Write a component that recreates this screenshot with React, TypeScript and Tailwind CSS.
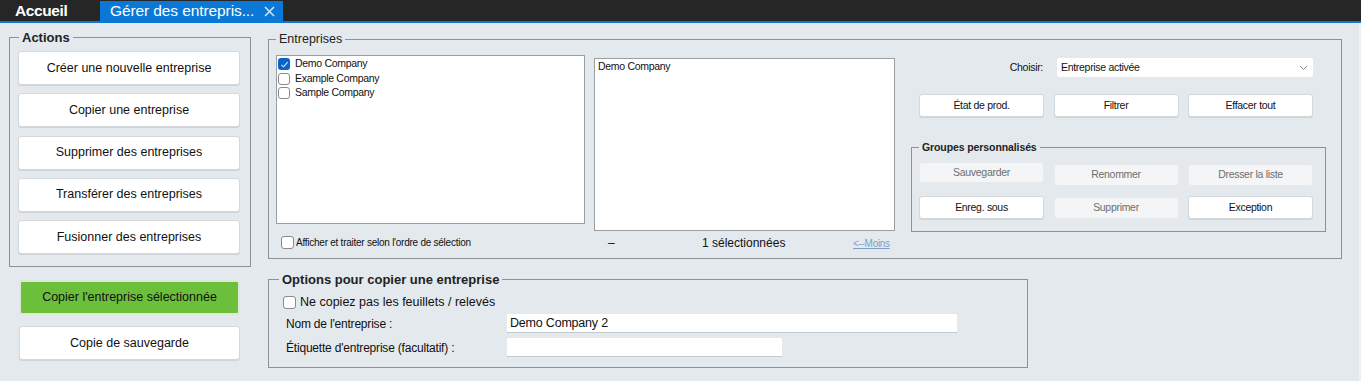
import React from "react";

const Btn = ({
  children,
  className = "",
  disabled = false,
}: {
  children: React.ReactNode;
  className?: string;
  disabled?: boolean;
}) => (
  <div
    className={
      "flex items-center justify-center rounded-[3px] border " +
      (disabled
        ? "border-[#e6eaed] bg-[#f3f5f6] text-[#6e6e6e] "
        : "border-[#d3d8dc] bg-white text-[#111] shadow-[0_1px_0_#cfd4d8] ") +
      className
    }
  >
    {children}
  </div>
);

const Box = ({ checked = false, size = "w-[13px] h-[13px]" }: { checked?: boolean; size?: string }) =>
  checked ? (
    <div className={"flex shrink-0 items-center justify-center rounded-[3px] bg-[#0b63c4] " + size}>
      <svg width="9" height="9" viewBox="0 0 9 9">
        <polyline points="1.5,4.8 3.6,6.8 7.6,2.2" fill="none" stroke="#dfe9f6" strokeWidth="1.1" />
      </svg>
    </div>
  ) : (
    <div className={"shrink-0 rounded-[3px] border border-[#8a8a8a] bg-white " + size} />
  );

export default function App() {
  return (
    <div className="h-[381px] w-[1361px] overflow-hidden bg-[#e3e9ed] font-['Liberation_Sans',Arial,sans-serif] text-[#111]">
      {/* tab bar */}
      <div className="flex h-[23px] border-b-2 border-[#0a78d4] bg-[#262626]">
        <div className="flex w-[100px] items-center pl-[15px] text-[15.5px] font-bold tracking-[-0.4px] text-white">
          Accueil
        </div>
        <div className="mt-[1px] flex w-[183px] items-center bg-[#0a78d4] pl-[10px] text-[15.5px] tracking-[-0.1px] text-white">
          <span>Gérer des entrepris...</span>
          <svg className="ml-[10px]" width="11" height="11" viewBox="0 0 11 11">
            <path d="M1 1 L10 10 M10 1 L1 10" stroke="#cfe3f6" strokeWidth="1.6" />
          </svg>
        </div>
      </div>

      {/* body */}
      <div className="flex h-[358px] border-r-2 border-[#eef2f4] pl-[9px]">
        {/* left column */}
        <div className="flex w-[242px] flex-col">
          <div className="mt-[14px] border border-[#8c9196]">
            <div className="-mt-[8px] ml-[9px] w-fit bg-[#e3e9ed] px-[3px] text-[13px] font-bold leading-[15px] text-[#222]">
              Actions
            </div>
            <div className="mt-[6px] flex flex-col gap-[8.25px] pb-[12px] pl-[8px] pr-[10px] text-[12.5px]">
              <Btn className="h-[34px]">Créer une nouvelle entreprise</Btn>
              <Btn className="h-[34px]">Copier une entreprise</Btn>
              <Btn className="h-[34px]">Supprimer des entreprises</Btn>
              <Btn className="h-[34px]">Transférer des entreprises</Btn>
              <Btn className="h-[34px]">Fusionner des entreprises</Btn>
            </div>
          </div>
          <div className="ml-[10px] mt-[13px] flex h-[35px] w-[221px] items-center justify-center rounded-[3px] border-2 border-[#dfe6da] bg-[#6bbf3a] text-[12.5px] text-[#111]">
            Copier l'entreprise sélectionnée
          </div>
          <Btn className="ml-[10px] mt-[11px] h-[34px] w-[221px] text-[12.5px]">Copie de sauvegarde</Btn>
        </div>

        {/* right column */}
        <div className="ml-[17px] flex flex-col">
          {/* Entreprises */}
          <div className="mt-[16px] h-[220px] w-[1074px] border border-[#8c9196]">
            <div className="-mt-[8px] ml-[7px] w-fit bg-[#e3e9ed] px-[3px] text-[12.5px] leading-[15px] text-[#222]">
              Entreprises
            </div>
            <div className="flex items-start">
              {/* list 1 */}
              <div className="ml-[7px] mt-[8px] flex w-[309px] flex-col">
                <div className="h-[169px] border border-[#9a9fa4] bg-white pl-[1px] pt-[1px] text-[10.5px] tracking-[-0.3px]">
                  {[
                    ["Demo Company", true],
                    ["Example Company", false],
                    ["Sample Company", false],
                  ].map(([n, c]) => (
                    <div key={n as string} className="flex h-[14.5px] items-center gap-[5px]">
                      <Box checked={c as boolean} size="w-[12px] h-[12px]" />
                      <span>{n as string}</span>
                    </div>
                  ))}
                </div>
                <div className="ml-[5px] mt-[11px] flex h-[14px] items-center gap-[2px] text-[10px] tracking-[-0.25px]">
                  <Box />
                  <span>Afficher et traiter selon l'ordre de sélection</span>
                </div>
              </div>

              {/* list 2 */}
              <div className="ml-[9px] mt-[11px] flex w-[301px] flex-col">
                <div className="h-[173px] border border-[#9a9fa4] bg-white pl-[3px] text-[10.5px] tracking-[-0.3px]">
                  Demo Company
                </div>
                <div className="mt-[5px] flex h-[14px] items-center">
                  <span className="ml-[14px] w-[94px] text-[12px]">–</span>
                  <span className="w-[151px] text-[12px]">1 sélectionnées</span>
                  <span className="text-[10px] tracking-[-0.3px] text-[#7f9fc8] underline">&lt;--Moins</span>
                </div>
              </div>

              {/* right controls */}
              <div className="ml-[16px] flex w-[415px] flex-col">
                <div className="mt-[11px] flex h-[19px] items-center justify-end gap-[14px] pr-[13px]">
                  <span className="text-[10.5px] tracking-[-0.3px]">Choisir:</span>
                  <div className="flex h-[19px] w-[256px] items-center justify-between rounded-[2px] bg-white pl-[4px] pr-[5px] text-[10.5px] tracking-[-0.3px]">
                    <span>Entreprise activée</span>
                    <svg width="9" height="6" viewBox="0 0 9 6">
                      <polyline points="1,1 4.5,4.5 8,1" fill="none" stroke="#8a8a8a" strokeWidth="1" />
                    </svg>
                  </div>
                </div>
                <div className="mt-[17px] flex gap-[9.5px] pl-[8px] text-[10.5px] tracking-[-0.3px]">
                  <Btn className="h-[23px] w-[125px]">État de prod.</Btn>
                  <Btn className="h-[23px] w-[125px]">Filtrer</Btn>
                  <Btn className="h-[23px] w-[125px]">Effacer tout</Btn>
                </div>
                <div className="mt-[30px] h-[85px] w-[415px] border border-[#8c9196]">
                  <div className="-mt-[7px] ml-[7px] w-fit bg-[#e3e9ed] px-[3px] text-[10.5px] font-bold leading-[13px] tracking-[-0.1px] text-[#222]">
                    Groupes personnalisés
                  </div>
                  <div className="flex items-start gap-[9.5px] pl-[7px] text-[10.5px] tracking-[-0.3px]">
                    <Btn disabled className="mt-[8px] h-[21px] w-[125px]">Sauvegarder</Btn>
                    <Btn disabled className="mt-[10px] h-[22px] w-[125px]">Renommer</Btn>
                    <Btn disabled className="mt-[10px] h-[22px] w-[125px]">Dresser la liste</Btn>
                  </div>
                  <div className="flex items-start gap-[9.5px] pl-[7px] text-[10.5px] tracking-[-0.3px]">
                    <Btn className="mt-[10px] h-[23px] w-[125px]">Enreg. sous</Btn>
                    <Btn disabled className="mt-[11px] h-[22px] w-[125px]">Supprimer</Btn>
                    <Btn className="mt-[10px] h-[23px] w-[125px]">Exception</Btn>
                  </div>
                </div>
              </div>
            </div>
          </div>

          {/* Options */}
          <div className="mt-[20px] h-[89px] w-[760px] border border-[#8c9196]">
            <div className="-mt-[8px] ml-[10px] w-fit bg-[#e3e9ed] px-[3px] text-[13px] font-bold leading-[15px] text-[#222]">
              Options pour copier une entreprise
            </div>
            <div className="ml-[14px] mt-[8px] flex h-[14px] items-center gap-[4px] text-[12.5px]">
              <Box />
              <span>Ne copiez pas les feuillets / relevés</span>
            </div>
            <div className="ml-[17px] mt-[5px] flex h-[19px] items-center text-[12px] tracking-[-0.2px]">
              <span className="w-[221px]">Nom de l'entreprise :</span>
              <div className="flex h-[19px] w-[450px] items-center border-b border-[#c4c9cd] bg-white pl-[3px] text-[12.5px]">
                Demo Company 2
              </div>
            </div>
            <div className="ml-[17px] mt-[5px] flex h-[19px] items-center text-[12px] tracking-[-0.2px]">
              <span className="w-[221px]">Étiquette d'entreprise (facultatif) :</span>
              <div className="h-[19px] w-[275px] border-b border-[#c4c9cd] bg-white" />
            </div>
          </div>
        </div>
      </div>
    </div>
  );
}
